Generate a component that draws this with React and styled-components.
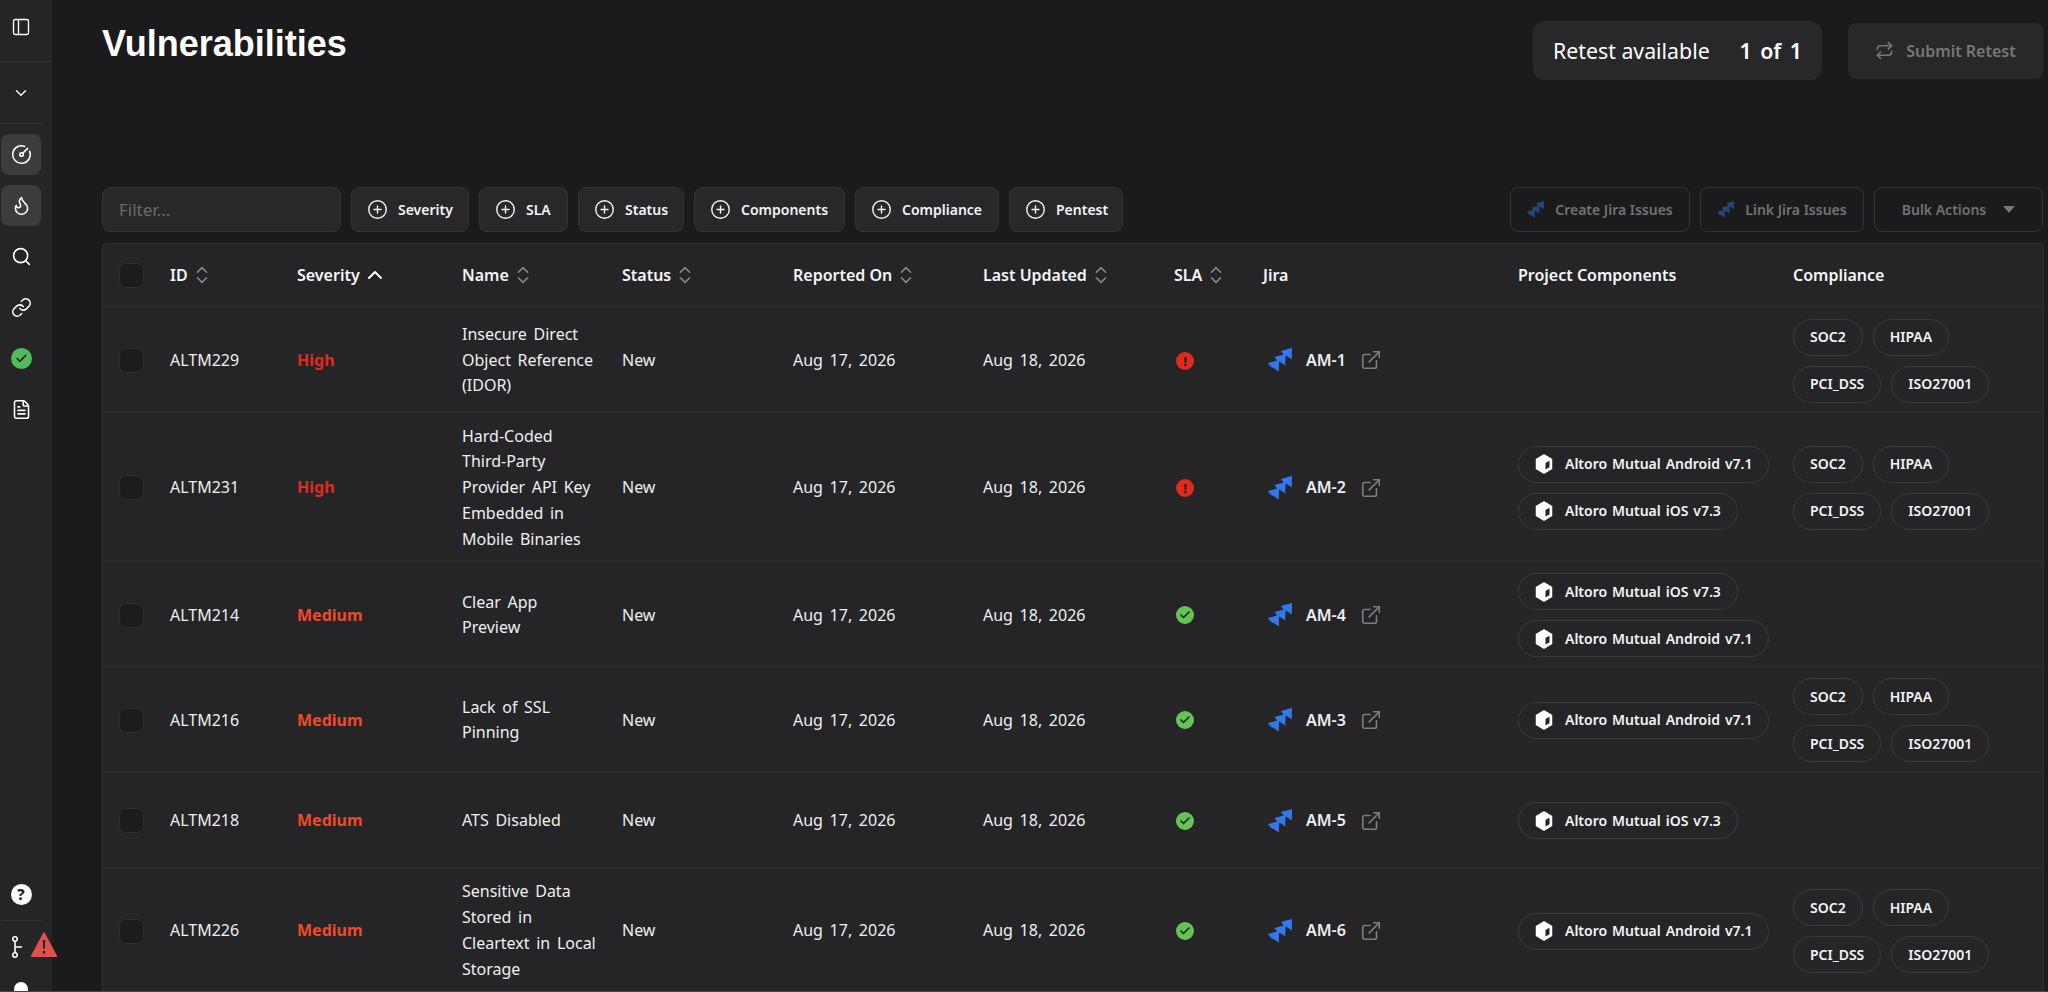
import React from 'react';
import styled, { createGlobalStyle } from 'styled-components';
import {
  PanelLeft, ChevronDown, ChevronsUpDown, ChevronUp, CircleGauge, Flame, Search, Link, Check, FileText,
  CirclePlus, Repeat, ExternalLink,
} from 'lucide-react';

const GlobalStyle = createGlobalStyle`
  html, body { margin: 0; padding: 0; height: 100%; background: #1b1b1d; }
  body { font-family: "Noto Sans", "Open Sans", sans-serif; color: #fff; overflow: hidden; }
`;

const Page = styled.div`
  display: flex;
  height: 991px;
  overflow: hidden;
  border-bottom: 1px solid #46464a;
`;

const Sidebar = styled.aside`
  position: relative;
  width: 52px;
  flex: none;
  background: #252527;
  display: flex;
  flex-direction: column;
`;

const SideTop = styled.div`
  height: 62px;
  display: flex;
  align-items: center;
  justify-content: center;
  border-bottom: 1px solid #343436;
  padding: 0 10px 8px 0;
  box-sizing: border-box;
`;

const SideChevron = styled.div`
  height: 61px;
  display: flex;
  align-items: center;
  justify-content: center;
  margin-right: 11px;
  border-bottom: 1px solid #343436;
`;

const SideNav = styled.nav`
  display: flex;
  flex-direction: column;
  gap: 10px;
  padding: 10px 11px 0 1px;
  flex: 1;
`;

const SideItem = styled.div`
  height: 41px;
  border-radius: 8px;
  display: flex;
  align-items: center;
  justify-content: center;
  background: ${({ $active }) => ($active ? '#3c3c3f' : 'transparent')};
`;

const SideBottom = styled.div`
  display: flex;
  flex-direction: column;
  align-items: center;
  padding-right: 10px;
  height: 107px;
`;

const HelpDot = styled.div`
  width: 21px;
  height: 21px;
  border-radius: 50%;
  background: #fff;
  color: #252527;
  font-size: 15px;
  font-weight: 800;
  line-height: 21px;
  text-align: center;
  margin-bottom: 15px;
`;

const SideRule = styled.div`
  width: 40px;
  height: 1px;
  flex: none;
  background: #343436;
`;

const BranchIcon = styled.svg`
  width: 11px;
  height: 22px;
  margin: 15px 8px 0 0;
  flex: none;
`;

const BellTop = styled.div`
  width: 14px;
  height: 14px;
  flex: none;
  margin-top: 24px;
  border-radius: 7px 7px 0 0;
  background: #fff;
`;

const Warning = styled.svg`
  position: absolute;
  left: 31px;
  top: 932px;
  width: 26px;
  height: 25px;
`;

const CheckDot = styled.div`
  width: 21px;
  height: 21px;
  border-radius: 50%;
  background: #4ebc5c;
  color: #1b1b1d;
  display: flex;
  align-items: center;
  justify-content: center;
`;

const Main = styled.main`
  flex: 1;
  min-width: 0;
  padding: 0 5px 0 50px;
`;

const Header = styled.header`
  display: flex;
  justify-content: space-between;
  align-items: flex-start;
  height: 187px;
`;

const Title = styled.h1`
  margin: 22px 0 0;
  font-family: "Liberation Sans", Arial, sans-serif;
  font-size: 36px;
  line-height: 44px;
  font-weight: 700;
  color: #fff;
`;

const HeaderRight = styled.div`
  display: flex;
  align-items: center;
  gap: 26px;
  padding-top: 21px;
`;

const RetestBox = styled.div`
  width: 289px;
  height: 59px;
  box-sizing: border-box;
  background: #28282a;
  border-radius: 12px;
  padding: 0 20px;
  display: flex;
  align-items: center;
  justify-content: space-between;
  font-size: 21.3px;
  color: #fff;
  b { font-weight: 600; word-spacing: 3px; }
`;

const SubmitButton = styled.div`
  width: 195px;
  height: 56px;
  background: #28282a;
  border-radius: 8px;
  display: flex;
  align-items: center;
  justify-content: center;
  gap: 12px;
  font-size: 16px;
  font-weight: 600;
  color: #777779;
`;

const Toolbar = styled.div`
  display: flex;
  align-items: stretch;
  height: 45px;
  gap: 10px;
  margin-bottom: 11px;
`;

const FilterInput = styled.div`
  width: 239px;
  box-sizing: border-box;
  background: #28282a;
  border: 1px solid #333335;
  border-radius: 8px;
  padding: 0 16px;
  display: flex;
  align-items: center;
  color: #6a6a6c;
  font-size: 17px;
`;

const FilterButton = styled.div`
  box-sizing: border-box;
  width: ${({ $w }) => $w}px;
  background: #28282a;
  border: 1px solid #333335;
  border-radius: 8px;
  padding-left: 15px;
  display: flex;
  align-items: center;
  gap: 10px;
  font-size: 14px;
  font-weight: 600;
  color: #f4f4f4;
`;

const ToolSpacer = styled.div`
  flex: 1;
`;

const GhostButton = styled.div`
  box-sizing: border-box;
  width: ${({ $w }) => $w}px;
  border: 1px solid #333335;
  border-radius: 8px;
  display: flex;
  align-items: center;
  justify-content: center;
  gap: 11px;
  font-size: 14px;
  font-weight: 600;
  color: #727274;
`;

const Caret = styled.span`
  width: 0;
  height: 0;
  margin-left: 6px;
  border-left: 6px solid transparent;
  border-right: 6px solid transparent;
  border-top: 7px solid #77777a;
`;

const Table = styled.table`
  width: 1941px;
  table-layout: fixed;
  border-collapse: separate;
  border-spacing: 0;
  background: #252527;
  border: 1px solid #303032;
  border-bottom: 0;
  border-radius: 4px 4px 0 0;
  font-size: 16px;
`;

const Th = styled.th`
  height: 62px;
  padding: 0 8px 0 16px;
  text-align: left;
  font-weight: 600;
  font-size: 16px;
  color: #f6f6f6;
  border-bottom: 1px solid #2c2c2e;
  white-space: nowrap;
`;

const HeadInner = styled.span`
  display: inline-flex;
  align-items: center;
  gap: 3px;
`;

const Td = styled.td`
  padding: 11.5px 8px 8.5px 16px;
  color: #efeff0;
  line-height: 25.8px;
  word-spacing: 2.5px;
  border-bottom: 1px solid #2c2c2e;
  height: 75px;
  white-space: pre-line;
`;

const Box = styled.div`
  width: 25px;
  height: 25px;
  box-sizing: border-box;
  background: #1c1c1e;
  border: 1px solid #2e2e30;
  border-radius: 7px;
`;

const Severity = styled.span`
  font-weight: 700;
  word-spacing: 0;
  color: ${({ $level }) => ($level === 'High' ? '#e0291f' : '#ef4a28')};
`;

const SlaDot = styled.div`
  width: 18px;
  height: 18px;
  margin-left: 2px;
  border-radius: 50%;
  display: flex;
  align-items: center;
  justify-content: center;
  background: ${({ $ok }) => ($ok ? '#62c554' : '#e0291f')};
  color: #252527;
  font-size: 13px;
  font-weight: 800;
  line-height: 18px;
`;

const JiraCell = styled.div`
  display: flex;
  align-items: center;
  gap: 14px;
  padding-left: 5px;
  font-weight: 600;
  font-size: 16px;
`;

const OpenIcon = styled.span`
  display: flex;
  color: #7d7d7f;
`;

const ChipWrap = styled.div`
  display: flex;
  flex-wrap: wrap;
  gap: 10px;
`;

const Chip = styled.div`
  height: 37px;
  box-sizing: border-box;
  border: 1px solid #3a3a3c;
  border-radius: 19px;
  padding: 0 16px;
  display: inline-flex;
  align-items: center;
  gap: 12px;
  font-size: 14px;
  font-weight: 600;
  word-spacing: 1.3px;
  white-space: nowrap;
  color: #f4f4f4;
  line-height: 1;
`;

const CompRow = styled.div`
  display: flex;
  gap: 10px;
`;

const jiraPiece = (x, y) =>
  `M${x} ${y + 3}L${x + 11} ${y}L${x + 10.800} ${y + 11.500}L${x + 6.500} ${y + 8.500}L${x + 3} ${y + 7}Z`;

const JiraIcon = ({ size = 24, dim }) => (
  <svg width={size} height={size} viewBox="0 0 24 24" style={{ flex: 'none', opacity: dim ? 0.45 : 1 }}>
    <path fill="#3279ee" d={jiraPiece(13, 0)} />
    <path fill="#3279ee" d={jiraPiece(6.500, 6)} />
    <path fill="#3279ee" d={jiraPiece(0, 12)} />
  </svg>
);

const CubeIcon = () => (
  <svg width="18" height="20" viewBox="0 0 18 20" style={{ flex: 'none' }}>
    <path fill="#fff" stroke="#fff" strokeWidth="1.500" strokeLinejoin="round" d="M9 1l7.500 4.300v9.400L9 19l-7.500-4.300V5.300z" />
    <path fill="#252527" d="M10.500 9l4-2.300v6.600l-4 2.300z" />
  </svg>
);

const columns = [
  { w: 51 }, { w: 127, label: 'ID', sort: true }, { w: 165, label: 'Severity', up: true },
  { w: 160, label: 'Name', sort: true }, { w: 171, label: 'Status', sort: true },
  { w: 190, label: 'Reported On', sort: true }, { w: 191, label: 'Last Updated', sort: true },
  { w: 89, label: 'SLA', sort: true }, { w: 255, label: 'Jira' },
  { w: 275, label: 'Project Components' }, { w: 266, label: 'Compliance' },
];

const android = 'Altoro Mutual Android v7.1';
const ios = 'Altoro Mutual iOS v7.3';

const rows = [
  { id: 'ALTM229', sev: 'High', name: 'Insecure Direct\nObject Reference\n(IDOR)', ok: false, jira: 'AM-1', comps: [], comp: true },
  { id: 'ALTM231', sev: 'High', name: 'Hard-Coded\nThird-Party\nProvider API Key\nEmbedded in\nMobile Binaries', ok: false, jira: 'AM-2', comps: [android, ios], comp: true },
  { id: 'ALTM214', sev: 'Medium', name: 'Clear App\nPreview', ok: true, jira: 'AM-4', comps: [ios, android], comp: false },
  { id: 'ALTM216', sev: 'Medium', name: 'Lack of SSL\nPinning', ok: true, jira: 'AM-3', comps: [android], comp: true },
  { id: 'ALTM218', sev: 'Medium', name: 'ATS Disabled', ok: true, jira: 'AM-5', comps: [ios], comp: false },
  { id: 'ALTM226', sev: 'Medium', name: 'Sensitive Data\nStored in\nCleartext in Local\nStorage', ok: true, jira: 'AM-6', comps: [android], comp: true },
];

const filters = [
  ['Severity', 118], ['SLA', 89], ['Status', 106], ['Components', 151], ['Compliance', 144], ['Pentest', 114],
];

export default function App() {
  return (
    <>
      <GlobalStyle />
      <Page>
        <Sidebar>
          <SideTop><PanelLeft size={20} color="#fff" strokeWidth={1.6} /></SideTop>
          <SideChevron><ChevronDown size={18} color="#fff" strokeWidth={1.8} /></SideChevron>
          <SideNav>
            <SideItem $active><CircleGauge size={21} color="#fff" strokeWidth={1.8} /></SideItem>
            <SideItem $active><Flame size={21} color="#fff" strokeWidth={1.8} /></SideItem>
            <SideItem><Search size={21} color="#fff" strokeWidth={1.8} /></SideItem>
            <SideItem><Link size={21} color="#fff" strokeWidth={1.8} /></SideItem>
            <SideItem><CheckDot><Check size={13} strokeWidth={3} /></CheckDot></SideItem>
            <SideItem><FileText size={21} color="#fff" strokeWidth={1.8} /></SideItem>
          </SideNav>
          <SideBottom>
            <HelpDot>?</HelpDot>
            <SideRule />
            <BranchIcon viewBox="0 0 11 22">
              <path fill="none" stroke="#fff" strokeWidth="1.600" d="M3 5v12M3 11h7" />
              <circle cx="3" cy="3" r="2.200" fill="none" stroke="#fff" strokeWidth="1.600" />
              <circle cx="3" cy="19" r="2.200" fill="none" stroke="#fff" strokeWidth="1.600" />
            </BranchIcon>
            <BellTop />
          </SideBottom>
          <Warning viewBox="0 0 26 25">
            <path fill="#e14f4f" stroke="#e14f4f" strokeLinejoin="round" strokeWidth="2" d="M13 1.500L25 24H1z" />
            <path fill="#252527" d="M11.800 8h2.400l-.4 9h-1.600zM11.800 19h2.400v2.400h-2.400z" />
          </Warning>
        </Sidebar>
        <Main>
          <Header>
            <Title>Vulnerabilities</Title>
            <HeaderRight>
              <RetestBox>Retest available <b>1 of 1</b></RetestBox>
              <SubmitButton><Repeat size={19} />Submit Retest</SubmitButton>
            </HeaderRight>
          </Header>
          <Toolbar>
            <FilterInput>Filter...</FilterInput>
            {filters.map(([label, w]) => (
              <FilterButton key={label} $w={w}><CirclePlus size={21} strokeWidth={1.6} />{label}</FilterButton>
            ))}
            <ToolSpacer />
            <GhostButton $w={180}><JiraIcon size={17} dim />Create Jira Issues</GhostButton>
            <GhostButton $w={164}><JiraIcon size={17} dim />Link Jira Issues</GhostButton>
            <GhostButton $w={169}>Bulk Actions <Caret /></GhostButton>
          </Toolbar>
          <Table>
            <colgroup>
              {columns.map((c, i) => <col key={i} style={{ width: c.w }} />)}
            </colgroup>
            <thead>
              <tr>
                {columns.map((c, i) => (
                  <Th key={i}>
                    {i === 0 ? <Box /> : (
                      <HeadInner>
                        {c.label}
                        {c.sort && <ChevronsUpDown size={22} color="#8a8a8c" strokeWidth={1.7} />}
                        {c.up && <ChevronUp size={24} color="#fff" strokeWidth={2} />}
                      </HeadInner>
                    )}
                  </Th>
                ))}
              </tr>
            </thead>
            <tbody>
              {rows.map((r) => (
                <tr key={r.id}>
                  <Td><Box /></Td>
                  <Td>{r.id}</Td>
                  <Td><Severity $level={r.sev}>{r.sev}</Severity></Td>
                  <Td>{r.name}</Td>
                  <Td>New</Td>
                  <Td>Aug 17, 2026</Td>
                  <Td>Aug 18, 2026</Td>
                  <Td><SlaDot $ok={r.ok}>{r.ok ? <Check size={12} strokeWidth={3.5} /> : '!'}</SlaDot></Td>
                  <Td>
                    <JiraCell><JiraIcon />{r.jira}<OpenIcon><ExternalLink size={22} strokeWidth={1.8} /></OpenIcon></JiraCell>
                  </Td>
                  <Td>
                    <ChipWrap>
                      {r.comps.map((c) => <Chip key={c}><CubeIcon />{c}</Chip>)}
                    </ChipWrap>
                  </Td>
                  <Td>
                    {r.comp && (
                      <ChipWrap>
                        <CompRow><Chip>SOC2</Chip><Chip>HIPAA</Chip></CompRow>
                        <CompRow><Chip>PCI_DSS</Chip><Chip>ISO27001</Chip></CompRow>
                      </ChipWrap>
                    )}
                  </Td>
                </tr>
              ))}
            </tbody>
          </Table>
        </Main>
      </Page>
    </>
  );
}
